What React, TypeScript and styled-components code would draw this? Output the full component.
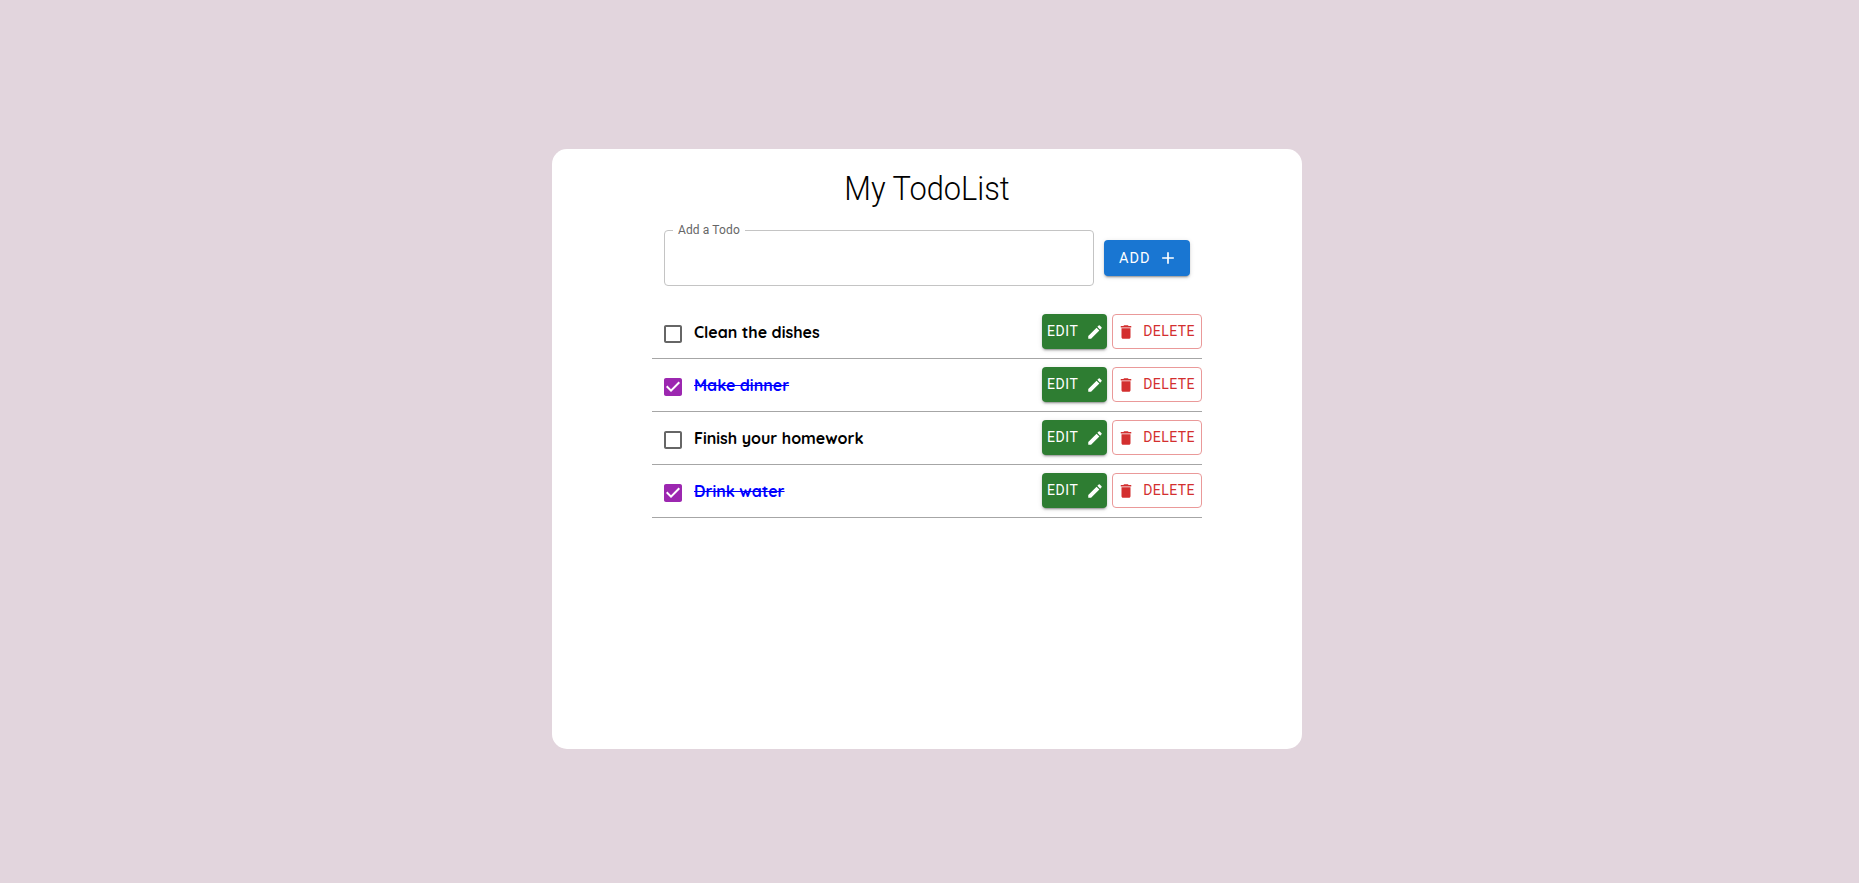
import React from 'react';
import styled, { createGlobalStyle, css } from 'styled-components';

const GlobalStyle = createGlobalStyle`
  * { box-sizing: border-box; }
  body { margin: 0; background: #e2d5dd; }
`;

const Page = styled.main`
  height: 100vh;
  display: flex;
  justify-content: center;
  align-items: center;
  padding: 15px 5px 0 0;
  font-family: Roboto, "Liberation Sans", sans-serif;
`;

const Card = styled.section`
  width: 750px;
  height: 600px;
  padding: 20px 100px 0;
  border-radius: 15px;
  background: #fff;
`;

const Title = styled.h1`
  margin: 0;
  height: 61px;
  line-height: 39px;
  text-align: center;
  font-size: 34px;
  font-weight: 300;
  color: #000;
  transform: scaleX(0.905);
`;

const AddForm = styled.form`
  display: flex;
  align-items: center;
  gap: 10px;
  height: 56px;
  padding: 0 12px;
`;

const Field = styled.fieldset`
  width: 430px;
  height: 61px;
  margin: -5px 0 0;
  padding: 0 8px;
  border: 1px solid #c4c4c4;
  border-radius: 4px;
`;

const FieldLabel = styled.legend`
  height: 11px;
  padding: 0 5px;
  line-height: 10px;
  font-size: 12px;
  letter-spacing: 0.12px;
  color: #666;
`;

const FieldInput = styled.input`
  width: 100%;
  height: 44px;
  border: 0;
  outline: 0;
  background: transparent;
  font: 16px Roboto, sans-serif;
`;

type Tone = 'primary' | 'success' | 'danger';

const raised = css`
  border: 0;
  color: #fff;
  box-shadow: 0 3px 1px -2px rgba(0, 0, 0, 0.2), 0 2px 2px rgba(0, 0, 0, 0.14),
    0 1px 5px rgba(0, 0, 0, 0.12);
`;

const tones = {
  primary: css`
    ${raised}
    width: 86px;
    height: 36px;
    padding: 0 12px 0 15px;
    font-size: 14.5px;
    letter-spacing: 1px;
    background: #1976d2;
  `,
  success: css`
    ${raised}
    width: 65px;
    height: 35px;
    padding: 0 3px 0 5px;
    letter-spacing: 0.6px;
    background: #2e7d32;
  `,
  danger: css`
    width: 90px;
    height: 35px;
    padding: 0 6px 0 4px;
    border: 1px solid #ea9999;
    letter-spacing: 0.45px;
    color: #d32f2f;
    background: #fff;
  `,
};

const Button = styled.button<{ $tone: Tone }>`
  display: flex;
  flex-shrink: 0;
  align-items: center;
  justify-content: space-between;
  border-radius: 4px;
  font-family: Roboto, "Liberation Sans", sans-serif;
  font-size: 14px;
  font-weight: 400;
  text-transform: uppercase;
  ${({ $tone }) => tones[$tone]}
`;

const ActionLabel = styled.span`
  padding-bottom: 2px;
`;

const Glyph = styled.svg<{ $size: number }>`
  flex-shrink: 0;
  width: ${({ $size }) => $size}px;
  height: ${({ $size }) => $size}px;
  fill: currentColor;
`;

const List = styled.ul`
  margin: 20px 0 0;
  padding: 0;
  list-style: none;
`;

const Row = styled.li`
  display: flex;
  align-items: center;
  height: 53px;
  padding-left: 9px;
  border-bottom: 1px solid #a6a6a6;
`;

const Check = styled.span<{ $checked: boolean }>`
  display: flex;
  margin-top: 3px;
  color: ${({ $checked }) => ($checked ? '#9c27b0' : '#666')};
`;

const TaskName = styled.span<{ $done: boolean }>`
  flex: 1;
  padding-left: 9px;
  font-family: Quicksand, Lato, sans-serif;
  font-size: 16px;
  font-weight: 700;
  color: ${({ $done }) => ($done ? '#00f' : '#000')};
  text-decoration: ${({ $done }) => ($done ? 'line-through' : 'none')};
`;

const Actions = styled.div`
  display: flex;
  gap: 5px;
  margin-bottom: 1px;
`;

const icons = {
  add: 'M19 13h-6v6h-2v-6H5v-2h6V5h2v6h6v2z',
  edit: 'M3 17.25V21h3.75L17.81 9.94l-3.75-3.75L3 17.25zM20.71 7.04c.39-.39.39-1.02 0-1.41l-2.34-2.34a.9959.9959 0 0 0-1.41 0l-1.83 1.83 3.75 3.75 1.83-1.83z',
  remove: 'M6 19c0 1.1.9 2 2 2h8c1.1 0 2-.9 2-2V7H6v12zM19 4h-3.5l-1-1h-5l-1 1H5v2h14V4z',
  unchecked: 'M19 5v14H5V5h14m0-2H5c-1.1 0-2 .9-2 2v14c0 1.1.9 2 2 2h14c1.1 0 2-.9 2-2V5c0-1.1-.9-2-2-2z',
  checked: 'M19 3H5c-1.11 0-2 .9-2 2v14c0 1.1.89 2 2 2h14c1.11 0 2-.9 2-2V5c0-1.1-.89-2-2-2zm-9 14l-5-5 1.41-1.41L10 14.17l7.59-7.59L19 8l-9 9z',
};

function Icon({ name, size = 20 }: { name: keyof typeof icons; size?: number }) {
  return (
    <Glyph $size={size} viewBox="0 0 24 24" aria-hidden="true">
      <path d={icons[name]} />
    </Glyph>
  );
}

const tasks = [
  { name: 'Clean the dishes', done: false },
  { name: 'Make dinner', done: true },
  { name: 'Finish your homework', done: false },
  { name: 'Drink water', done: true },
];

export default function App() {
  return (
    <>
      <GlobalStyle />
      <Page>
        <Card>
          <Title>My TodoList</Title>
          <AddForm>
            <Field>
              <FieldLabel>Add a Todo</FieldLabel>
              <FieldInput aria-label="Add a Todo" />
            </Field>
            <Button $tone="primary" type="button">Add<Icon name="add" /></Button>
          </AddForm>
          <List>
            {tasks.map((task) => (
              <Row key={task.name}>
                <Check $checked={task.done} role="checkbox" aria-checked={task.done}>
                  <Icon name={task.done ? 'checked' : 'unchecked'} size={24} />
                </Check>
                <TaskName $done={task.done}>{task.name}</TaskName>
                <Actions>
                  <Button $tone="success" type="button">
                    <ActionLabel>Edit</ActionLabel>
                    <Icon name="edit" size={18} />
                  </Button>
                  <Button $tone="danger" type="button">
                    <Icon name="remove" size={18} />
                    <ActionLabel>Delete</ActionLabel>
                  </Button>
                </Actions>
              </Row>
            ))}
          </List>
        </Card>
      </Page>
    </>
  );
}
